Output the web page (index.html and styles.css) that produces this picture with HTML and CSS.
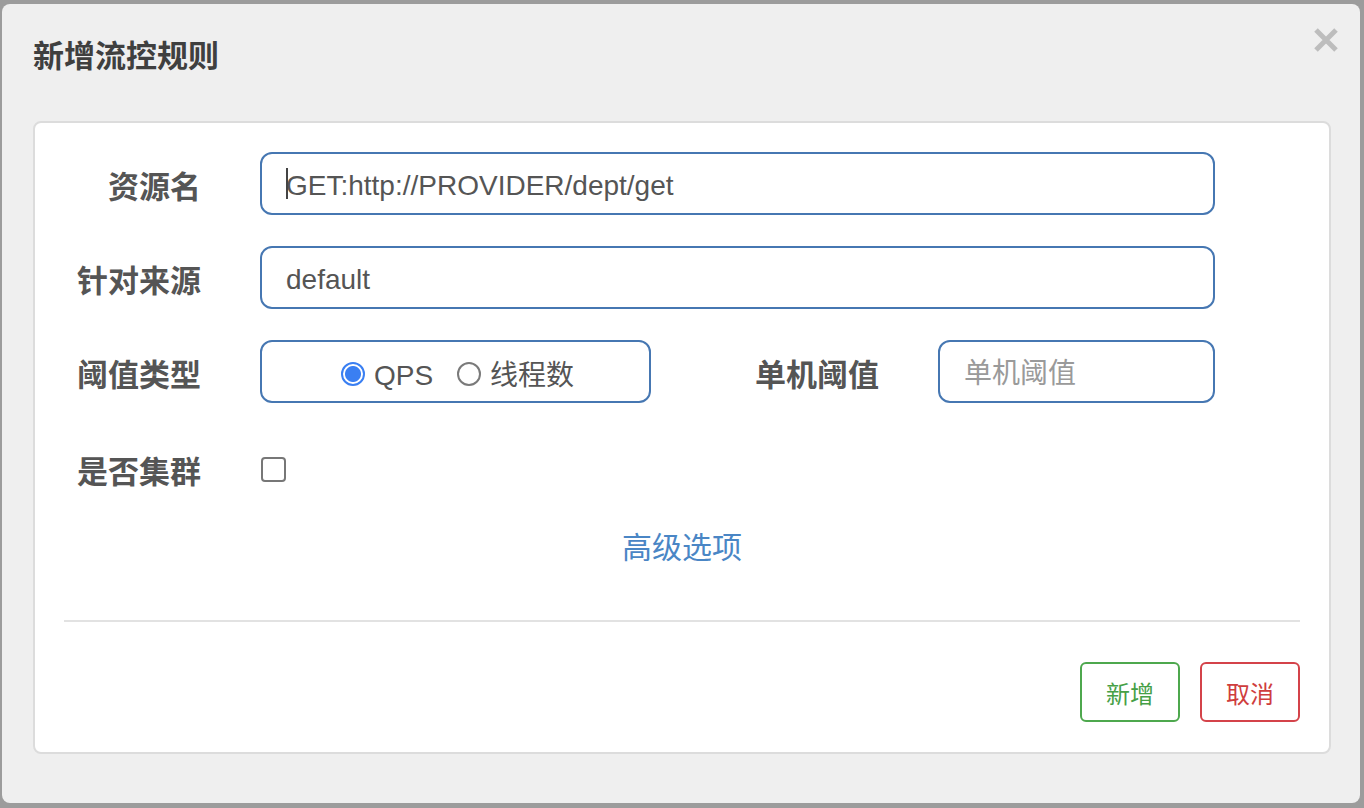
FILE: index.html
```html
<!DOCTYPE html>
<html lang="zh-CN">
<head>
<meta charset="utf-8">
<title>新增流控规则</title>
<link rel="stylesheet" href="styles.css">
</head>
<body>
<div class="modal">
  <div class="modal-header">
    <h4 class="modal-title">新增流控规则</h4>
    <button class="close" type="button" aria-label="关闭">
      <svg width="26" height="26" viewBox="0 0 26 26"><path d="M3 3 L23 23 M23 3 L3 23" stroke="#bdbdbd" stroke-width="5" stroke-linecap="butt"/></svg>
    </button>
  </div>
  <div class="card">
    <div class="row">
      <label class="label">资源名</label>
      <div class="field caret">
        <input class="control" type="text" value="GET:http://PROVIDER/dept/get">
      </div>
    </div>
    <div class="row">
      <label class="label">针对来源</label>
      <div class="field">
        <input class="control" type="text" value="default">
      </div>
    </div>
    <div class="row">
      <label class="label">阈值类型</label>
      <div class="radio-group">
        <label class="radio"><input type="radio" name="grade" checked><span>QPS</span></label>
        <label class="radio"><input type="radio" name="grade"><span>线程数</span></label>
      </div>
      <label class="label label-wide">单机阈值</label>
      <div class="field field-small">
        <input class="control" type="text" placeholder="单机阈值">
      </div>
    </div>
    <div class="row row-check">
      <label class="label">是否集群</label>
      <input class="checkbox" type="checkbox">
    </div>
    <div class="advanced"><a href="#">高级选项</a></div>
    <hr class="divider">
    <div class="actions">
      <button class="btn btn-success" type="button">新增</button>
      <button class="btn btn-danger" type="button">取消</button>
    </div>
  </div>
</div>
</body>
</html>
```
FILE: styles.css
```css
* { box-sizing: border-box; }
html, body { margin: 0; }
body {
  width: 1364px;
  height: 808px;
  background: #9c9c9c;
  padding: 4px 4px 5px 2px;
  font-family: "Liberation Sans", "Noto Sans CJK SC", sans-serif;
  overflow: hidden;
}
.modal {
  width: 1358px;
  height: 799px;
  background: #efefef;
  border-radius: 8px;
}
.modal-header {
  height: 117px;
  display: flex;
  justify-content: space-between;
  align-items: flex-start;
  padding: 0 21px 0 31px;
}
.modal-title {
  margin: 30px 0 0 0;
  font-size: 31px;
  line-height: 40px;
  font-weight: bold;
  color: #3f3f3f;
  font-family: "Noto Sans CJK SC", sans-serif;
}
.close {
  margin-top: 23px;
  padding: 0;
  border: 0;
  background: none;
  width: 26px;
  height: 26px;
  display: block;
}
.close svg { display: block; }
.card {
  margin: 0 29px 0 31px;
  background: #fff;
  border: 2px solid #dcdcdc;
  border-radius: 8px;
  padding: 29px 29px 30px 29px;
}
.row {
  display: flex;
  align-items: center;
  height: 63px;
  margin-bottom: 31px;
}
.label {
  width: 137px;
  flex: none;
  text-align: right;
  font-family: "Noto Sans CJK SC", sans-serif;
  font-weight: bold;
  font-size: 31px;
  line-height: 40px;
  color: #555;
  margin-right: 59px;
  position: relative;
  top: 1px;
}
.label-wide { width: 228px; }
.field {
  position: relative;
  width: 955px;
  height: 63px;
  flex: none;
}
.field-small { width: 277px; }
.control {
  display: block;
  width: 100%;
  height: 100%;
  border: 2px solid #4677b2;
  border-radius: 12px;
  padding: 4px 24px 0 24px;
  font-family: "Liberation Sans", "Noto Sans CJK SC", sans-serif;
  font-size: 28px;
  color: #555;
  background: #fff;
  outline: none;
}
.control::placeholder { color: #9a9a9a; }
.caret::before {
  content: "";
  position: absolute;
  left: 26px;
  top: 16px;
  width: 2px;
  height: 31px;
  background: #444;
  z-index: 1;
}
.radio-group {
  width: 391px;
  height: 63px;
  flex: none;
  border: 2px solid #4677b2;
  border-radius: 12px;
  display: flex;
  justify-content: center;
  align-items: center;
  gap: 24px;
  padding: 4px 0 0 4px;
}
.radio {
  display: flex;
  align-items: center;
  gap: 9px;
  font-size: 28px;
  color: #555;
  font-family: "Liberation Sans", "Noto Sans CJK SC", sans-serif;
}
.radio input {
  appearance: none;
  -webkit-appearance: none;
  margin: 0;
  width: 24px;
  height: 24px;
  border-radius: 50%;
  border: 2px solid #7a7a7a;
  background: #fff;
}
.radio input:checked {
  border: 2px solid #3a7ff2;
  background: radial-gradient(circle, #3a7ff2 0 7.5px, #fff 8.5px);
}
.radio span { line-height: 40px; position: relative; top: 2px; }
.row-check {
  height: 70px;
  margin-bottom: 21px;
}
.checkbox {
  appearance: none;
  -webkit-appearance: none;
  margin: 0 0 0 1px;
  width: 25px;
  height: 25px;
  border: 2px solid #777;
  border-radius: 4px;
  background: #fff;
}
.advanced {
  text-align: center;
  line-height: 40px;
  font-family: "Noto Sans CJK SC", sans-serif;
  font-size: 30px;
}
.advanced a {
  color: #4a86c5;
  text-decoration: none;
}
.divider {
  margin: 55px 0 40px 0;
  border: 0;
  height: 2px;
  background: #e2e2e2;
}
.actions {
  display: flex;
  justify-content: flex-end;
  gap: 20px;
}
.btn {
  width: 100px;
  height: 60px;
  border-radius: 6px;
  background: #fff;
  border: 2px solid;
  font-family: "Noto Sans CJK SC", sans-serif;
  font-size: 24px;
  padding: 0;
}
.btn-success { border-color: #4ea84e; color: #46a046; }
.btn-danger { border-color: #d4434a; color: #cf3d3d; }
```
